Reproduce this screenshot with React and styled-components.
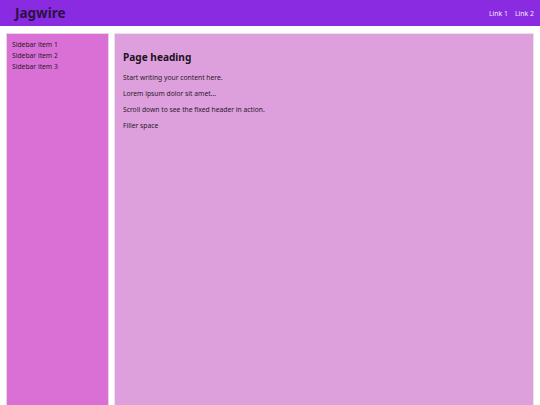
import React from 'react';
import styled, { createGlobalStyle } from 'styled-components';

const GlobalStyle = createGlobalStyle`
  html, body {
    margin: 0;
    padding: 0;
    background: #ffffff;
    font-family: "Noto Sans", "Open Sans", sans-serif;
  }
`;

const Header = styled.header`
  display: flex;
  align-items: center;
  justify-content: space-between;
  height: 26px;
  background-color: #8a2be2;
  padding: 0 6px 0 15px;
`;

const Logo = styled.h1`
  margin: 0;
  font-size: 13.5px;
  font-weight: 700;
  color: #2a1244;
  line-height: 1;
  padding-top: 2px;
`;

const Nav = styled.nav`
  display: flex;
  gap: 7px;
`;

const NavLink = styled.a`
  font-size: 6.9px;
  color: #f3e6ff;
  text-decoration: none;
`;

const Layout = styled.div`
  display: flex;
  gap: 5px;
  padding: 7px 6px 0;
`;

const Sidebar = styled.aside`
  width: 103px;
  flex-shrink: 0;
  height: 420px;
  background-color: #da70d6;
  border: 1px solid #e4d4e4;
  padding: 4.5px 5px;
  box-sizing: border-box;
`;

const SidebarItem = styled.div`
  font-size: 6.75px;
  line-height: 11px;
  color: #2a1a2a;
`;

const Main = styled.main`
  flex: 1;
  height: 420px;
  background-color: #dda0dd;
  border: 1px solid #ece0ec;
  padding: 16.5px 8px;
  box-sizing: border-box;
`;

const Heading = styled.h2`
  margin: 0 0 8px;
  font-size: 10.1px;
  line-height: 13px;
  font-weight: 700;
  color: #1e121e;
`;

const Paragraph = styled.p`
  margin: 0 0 5px;
  font-size: 6.75px;
  line-height: 11px;
  color: #2a1a2a;
`;

export default function App() {
  return (
    <>
      <GlobalStyle />
      <Header>
        <Logo>Jagwire</Logo>
        <Nav>
          <NavLink href="#">Link 1</NavLink>
          <NavLink href="#">Link 2</NavLink>
        </Nav>
      </Header>
      <Layout>
        <Sidebar>
          <SidebarItem>Sidebar item 1</SidebarItem>
          <SidebarItem>Sidebar item 2</SidebarItem>
          <SidebarItem>Sidebar item 3</SidebarItem>
        </Sidebar>
        <Main>
          <Heading>Page heading</Heading>
          <Paragraph>Start writing your content here.</Paragraph>
          <Paragraph>Lorem ipsum dolor sit amet...</Paragraph>
          <Paragraph>Scroll down to see the fixed header in action.</Paragraph>
          <Paragraph>Filler space</Paragraph>
        </Main>
      </Layout>
    </>
  );
}
